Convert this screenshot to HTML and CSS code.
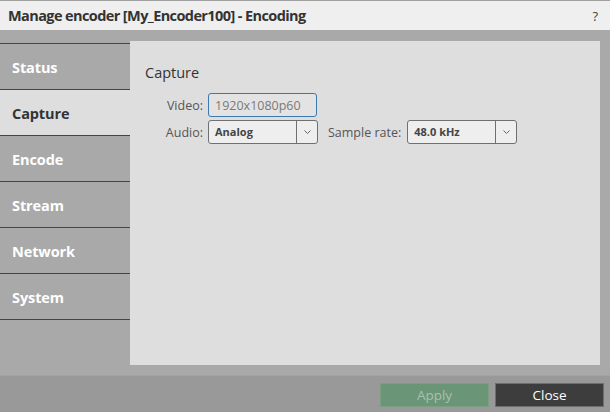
FILE: index.html
```html
<!DOCTYPE html>
<html lang="en">
<head>
  <meta charset="UTF-8">
  <title>Manage encoder</title>
  <link rel="stylesheet" href="styles.css">
</head>
<body>

<div class="dialog">
  <header class="titlebar">
    <h1>Manage encoder [My_Encoder100] - Encoding</h1>
    <span class="help">?</span>
  </header>

  <div class="main">
    <nav class="tabs">
      <a class="tab">Status</a>
      <a class="tab active">Capture</a>
      <a class="tab">Encode</a>
      <a class="tab">Stream</a>
      <a class="tab">Network</a>
      <a class="tab">System</a>
    </nav>

    <section class="panel">
      <h2>Capture</h2>
      <div class="form">
        <label class="lbl">Video:</label>
        <div class="row">
          <input class="text" type="text" value="1920x1080p60" readonly>
        </div>

        <label class="lbl">Audio:</label>
        <div class="row">
          <div class="select">
            <span class="value">Analog</span>
            <span class="arrow"><svg width="7" height="4" viewBox="0 0 7 4"><path d="M0.5 0.5 L3.5 3.5 L6.5 0.5" fill="none" stroke="#666" stroke-width="1"/></svg></span>
          </div>
          <label class="lbl inline">Sample rate:</label>
          <div class="select">
            <span class="value">48.0 kHz</span>
            <span class="arrow"><svg width="7" height="4" viewBox="0 0 7 4"><path d="M0.5 0.5 L3.5 3.5 L6.5 0.5" fill="none" stroke="#666" stroke-width="1"/></svg></span>
          </div>
        </div>
      </div>
    </section>
  </div>

  <footer class="actions">
    <button class="btn apply" disabled>Apply</button>
    <button class="btn close">Close</button>
  </footer>
</div>

</body>
</html>
```

FILE: styles.css
```css
* {
  box-sizing: border-box;
  margin: 0;
  padding: 0;
}

body {
  font-family: 'Open Sans', 'Noto Sans', sans-serif;
  background: #a9a9a9;
  color: #333;
  width: 610px;
  height: 412px;
  overflow: hidden;
}

.dialog {
  display: flex;
  flex-direction: column;
  height: 412px;
}

/* title bar */
.titlebar {
  height: 30px;
  border-top: 1px solid #a0a0a0;
  background: #efefef;
  display: flex;
  align-items: center;
  justify-content: space-between;
  padding: 0 12px 0 8px;
}

.titlebar h1 {
  font-size: 14.5px;
  font-weight: 700;
  color: #333;
  letter-spacing: -0.6px;
}

.help {
  font-size: 13px;
  color: #444;
}

/* body */
.main {
  height: 345px;
  display: flex;
  background: #a9a9a9;
}

.tabs {
  width: 130px;
  padding-top: 13px;
  display: flex;
  flex-direction: column;
}

.tab {
  height: 46px;
  border-top: 1px solid #444;
  display: flex;
  align-items: center;
  padding: 2px 0 0 12px;
  font-size: 14.5px;
  font-weight: 700;
  color: #fff;
  letter-spacing: -0.1px;
}

.tab:last-child {
  border-bottom: 1px solid #444;
  height: 47px;
}

.tab.active {
  background: #dedede;
  color: #333;
}

.panel {
  flex: 1;
  margin: 11px 10px 10px 0;
  background: #dedede;
  padding: 22px 15px;
}

.panel h2 {
  font-size: 14.5px;
  font-weight: 400;
  color: #333;
  line-height: 20px;
  margin-bottom: 10px;
}

.form {
  display: grid;
  grid-template-columns: 58px auto;
  column-gap: 5px;
  row-gap: 3px;
  align-items: center;
}

.lbl {
  font-size: 12.5px;
  color: #555;
  text-align: right;
}

.lbl.inline {
  margin: 0 6px 0 10px;
}

.row {
  display: flex;
  align-items: center;
}

.text {
  width: 109px;
  height: 24px;
  border: 1px solid #3a78ae;
  border-radius: 3px;
  background: #e3e3e3;
  font-family: inherit;
  font-size: 12.5px;
  color: #7a7a7a;
  padding: 0 6px;
  outline: none;
}

.select {
  width: 110px;
  height: 24px;
  border: 1px solid #707070;
  border-radius: 3px;
  background: #eeeeee;
  display: flex;
  overflow: hidden;
}

.select .value {
  flex: 1;
  padding-left: 6px;
  font-size: 11px;
  font-weight: 700;
  color: #444;
  line-height: 22px;
  border-right: 1px solid #707070;
}

.select .arrow {
  width: 20px;
  display: flex;
  align-items: center;
  justify-content: center;
}

/* footer */
.actions {
  flex: 1;
  background: #999;
  display: flex;
  justify-content: flex-end;
  gap: 6px;
  padding: 7px 6px 0 0;
  border-top: 1px solid #a3a3a3;
}

.btn {
  width: 109px;
  height: 24px;
  font-family: inherit;
  font-size: 13.5px;
  border: 1px solid #8a8a8a;
}

.apply {
  background: #6a9677;
  color: #a6c2ad;
  border-color: #7a9f85;
}

.close {
  background: #3d3d3d;
  color: #fff;
  border-color: #6e6e6e;
}
```
